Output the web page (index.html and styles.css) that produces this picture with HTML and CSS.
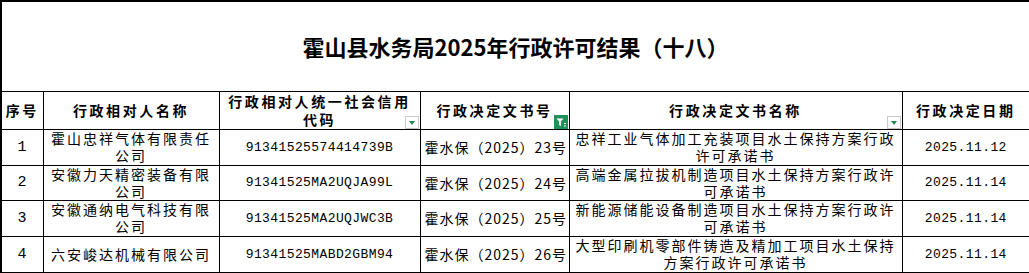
FILE: index.html
```html
<!DOCTYPE html>
<html lang="zh-CN">
<head>
<meta charset="utf-8">
<title>霍山县水务局2025年行政许可结果（十八）</title>
<link rel="stylesheet" href="styles.css">
</head>
<body>
<table class="sheet">
  <colgroup>
    <col class="c-seq"><col class="c-name"><col class="c-code"><col class="c-no"><col class="c-doc"><col class="c-date">
  </colgroup>
  <tr class="r-title">
    <td colspan="6" class="title">霍山县水务局2025年行政许可结果（十八）</td>
  </tr>
  <tr class="r-head">
    <th>序号</th>
    <th>行政相对人名称</th>
    <th><div class="hcell">行政相对人统一社会信用代码<span class="dd"></span></div></th>
    <th><div class="hcell">行政决定文书号<span class="dd active"><svg width="14" height="14" viewBox="0 0 14 14"><path d="M2.5 3.5h7l-2.6 3v4.5l-1.8 -1v-3.5z" fill="#fff"/><rect x="10" y="8" width="2" height="1" fill="#fff"/><rect x="10" y="10.5" width="2" height="1" fill="#fff"/></svg></span></div></th>
    <th><div class="hcell">行政决定文书名称<span class="dd"></span></div></th>
    <th>行政决定日期</th>
  </tr>
  <tr class="r1">
    <td class="num seq">1</td>
    <td class="txt">霍山忠祥气体有限责任公司</td>
    <td class="num">91341525574414739B</td>
    <td class="docno">霍水保（2025）23号</td>
    <td class="txt">忠祥工业气体加工充装项目水土保持方案行政许可承诺书</td>
    <td class="num">2025.11.12</td>
  </tr>
  <tr class="r2">
    <td class="num seq">2</td>
    <td class="txt">安徽力天精密装备有限公司</td>
    <td class="num">91341525MA2UQJA99L</td>
    <td class="docno">霍水保（2025）24号</td>
    <td class="txt">高端金属拉拔机制造项目水土保持方案行政许可承诺书</td>
    <td class="num">2025.11.14</td>
  </tr>
  <tr class="r3">
    <td class="num seq">3</td>
    <td class="txt">安徽通纳电气科技有限公司</td>
    <td class="num">91341525MA2UQJWC3B</td>
    <td class="docno">霍水保（2025）25号</td>
    <td class="txt">新能源储能设备制造项目水土保持方案行政许可承诺书</td>
    <td class="num">2025.11.14</td>
  </tr>
  <tr class="r4">
    <td class="num seq">4</td>
    <td class="txt">六安峻达机械有限公司</td>
    <td class="num">91341525MABD2GBM94</td>
    <td class="docno">霍水保（2025）26号</td>
    <td class="txt">大型印刷机零部件铸造及精加工项目水土保持方案行政许可承诺书</td>
    <td class="num">2025.11.14</td>
  </tr>
</table>
</body>
</html>
```
FILE: styles.css
```css
html, body {
  margin: 0;
  padding: 0;
  background: #fff;
}
.sheet {
  border-collapse: collapse;
  table-layout: fixed;
  width: 1029px;
  color: #000;
  font-family: "Noto Sans CJK SC", "Noto Sans", sans-serif;
}
.c-seq { width: 42px; }
.c-name { width: 176px; }
.c-code { width: 201px; }
.c-no { width: 149px; }
.c-doc { width: 333px; }
.c-date { width: 128px; }
.sheet td, .sheet th {
  border: 1px solid #000;
  padding: 0;
  text-align: center;
  vertical-align: middle;
}
.sheet tr:first-child td { border-top: 2px solid #000; }
.sheet td:first-child, .sheet th:first-child { border-left: 2px solid #000; }
.sheet td:last-child, .sheet th:last-child { border-right: 2px solid #000; }
.r-title { height: 90px; }
.r-head { height: 38px; }
.r1 { height: 36px; }
.r2 { height: 35px; }
.r3 { height: 36px; }
.r4 { height: 37px; }
.r4 td { border-bottom: 2px solid #000; }
.title {
  font-size: 22px;
  font-weight: 700;
  letter-spacing: 0;
  padding-top: 2px;
}
.sheet th {
  font-size: 14px;
  font-weight: 700;
  letter-spacing: 2.6px;
  line-height: 18px;
}
.hcell {
  position: relative;
  height: 37px;
  display: flex;
  align-items: center;
  justify-content: center;
  padding: 0 4px;
}
.dd {
  position: absolute;
  right: 1px;
  bottom: 0;
  width: 12px;
  height: 11px;
  border: 1px solid #c8c8c8;
  background: #fff;
}
.dd::after {
  content: "";
  position: absolute;
  left: 3px;
  top: 4px;
  border-left: 3px solid transparent;
  border-right: 3px solid transparent;
  border-top: 4px solid #1f8a4c;
}
.dd.active {
  width: 14px;
  height: 14px;
  border: 0;
  background: #21905a;
}
.dd.active::after { display: none; }
.dd.active svg { display: block; }
.txt {
  font-size: 14px;
  letter-spacing: 2px;
  line-height: 17px;
  padding: 0 4px !important;
}
.num {
  font-family: "Liberation Mono", monospace;
  font-size: 13px;
  letter-spacing: 0.4px;
}
.seq {
  font-size: 15px;
}
.docno {
  font-size: 14px;
  letter-spacing: 1px;
  text-align: left !important;
  padding-left: 4px !important;
}
```
